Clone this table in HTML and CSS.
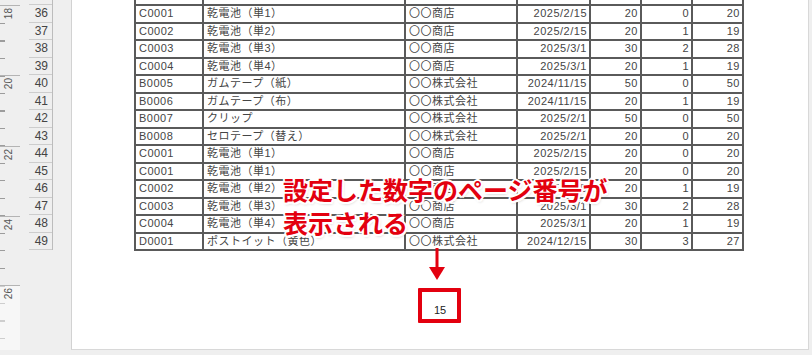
FILE: index.html
```html
<!DOCTYPE html>
<html lang="ja">
<head>
<meta charset="utf-8">
<title>ページ番号</title>
<link rel="stylesheet" href="styles.css">
</head>
<body>
<div class="app">
  <div class="workspace">
    <div class="ruler">
      <div class="ruler-light"></div>
      <div class="major m1"></div><span class="rlabel l1">18</span>
      <div class="major m2"></div><span class="rlabel l2">20</span>
      <div class="major m3"></div><span class="rlabel l3">22</span>
      <div class="major m4"></div><span class="rlabel l4">24</span>
      <div class="major m5"></div><span class="rlabel l5">26</span>
    </div>
    <div class="gutter">
      <div class="rowheads">
        <div class="rh"></div>
        <div class="rh">36</div>
        <div class="rh">37</div>
        <div class="rh">38</div>
        <div class="rh">39</div>
        <div class="rh">40</div>
        <div class="rh">41</div>
        <div class="rh">42</div>
        <div class="rh">43</div>
        <div class="rh">44</div>
        <div class="rh">45</div>
        <div class="rh">46</div>
        <div class="rh">47</div>
        <div class="rh">48</div>
        <div class="rh">49</div>
      </div>
    </div>
    <div class="page">
      <div class="sheet">
        <div></div><div></div><div></div><div class="n"></div><div class="n"></div><div class="n"></div><div class="n"></div>
        <div>C0001</div><div>乾電池（単1）</div><div>〇〇商店</div><div class="n">2025/2/15</div><div class="n">20</div><div class="n">0</div><div class="n">20</div>
        <div>C0002</div><div>乾電池（単2）</div><div>〇〇商店</div><div class="n">2025/2/15</div><div class="n">20</div><div class="n">1</div><div class="n">19</div>
        <div>C0003</div><div>乾電池（単3）</div><div>〇〇商店</div><div class="n">2025/3/1</div><div class="n">30</div><div class="n">2</div><div class="n">28</div>
        <div>C0004</div><div>乾電池（単4）</div><div>〇〇商店</div><div class="n">2025/3/1</div><div class="n">20</div><div class="n">1</div><div class="n">19</div>
        <div>B0005</div><div>ガムテープ（紙）</div><div>〇〇株式会社</div><div class="n">2024/11/15</div><div class="n">50</div><div class="n">0</div><div class="n">50</div>
        <div>B0006</div><div>ガムテープ（布）</div><div>〇〇株式会社</div><div class="n">2024/11/15</div><div class="n">20</div><div class="n">1</div><div class="n">19</div>
        <div>B0007</div><div>クリップ</div><div>〇〇株式会社</div><div class="n">2025/2/1</div><div class="n">50</div><div class="n">0</div><div class="n">50</div>
        <div>B0008</div><div>セロテープ（替え）</div><div>〇〇株式会社</div><div class="n">2025/2/1</div><div class="n">20</div><div class="n">0</div><div class="n">20</div>
        <div>C0001</div><div>乾電池（単1）</div><div>〇〇商店</div><div class="n">2025/2/15</div><div class="n">20</div><div class="n">0</div><div class="n">20</div>
        <div>C0001</div><div>乾電池（単1）</div><div>〇〇商店</div><div class="n">2025/2/15</div><div class="n">20</div><div class="n">0</div><div class="n">20</div>
        <div>C0002</div><div>乾電池（単2）</div><div>〇〇商店</div><div class="n">2025/2/15</div><div class="n">20</div><div class="n">1</div><div class="n">19</div>
        <div>C0003</div><div>乾電池（単3）</div><div>〇〇商店</div><div class="n">2025/3/1</div><div class="n">30</div><div class="n">2</div><div class="n">28</div>
        <div>C0004</div><div>乾電池（単4）</div><div>〇〇商店</div><div class="n">2025/3/1</div><div class="n">20</div><div class="n">1</div><div class="n">19</div>
        <div>D0001</div><div>ポストイット（黄色）</div><div>〇〇株式会社</div><div class="n">2024/12/15</div><div class="n">30</div><div class="n">3</div><div class="n">27</div>
      </div>
      <div class="footer">15</div>
    </div>
  </div>

  <div class="callout">設定した数字のページ番号が<br>表示される</div>
  <svg class="arrow" width="18" height="34" viewBox="0 0 18 34" aria-hidden="true">
    <rect x="7.5" y="0" width="3" height="22" fill="#e3000f"/>
    <polygon points="1,19 17,19 9,32" fill="#e3000f"/>
  </svg>
  <div class="redbox"></div>
</div>
</body>
</html>
```

FILE: styles.css
```css
* { box-sizing: border-box; }

body {
  margin: 0;
  background: #efefef;
  font-family: "Liberation Sans", "Noto Sans CJK JP", sans-serif;
}

.app {
  position: relative;
  width: 812px;
  height: 355px;
  overflow: hidden;
}

.workspace {
  display: flex;
  height: 350px;
}

/* vertical ruler */
.ruler {
  position: relative;
  flex: none;
  width: 20px;
  background-image: repeating-linear-gradient(to bottom, #9c9c9c 0 1px, transparent 1px 17.5px);
  background-size: 5px 100%;
  background-repeat: no-repeat;
  background-position: 0 22.5px;
}

.ruler-light {
  position: absolute;
  left: 0;
  top: 286px;
  width: 20px;
  height: 64px;
  background: rgba(255, 255, 255, 0.5);
}

.major {
  position: absolute;
  left: 0;
  width: 20px;
  height: 1px;
  background: #b4b4b4;
}
.m1 { top: 5px; }
.m2 { top: 75px; }
.m3 { top: 145.5px; }
.m4 { top: 216px; }
.m5 { top: 285px; }

.rlabel {
  position: absolute;
  left: 5px;
  writing-mode: vertical-rl;
  transform: rotate(180deg);
  font-size: 10px;
  line-height: 8px;
  color: #555;
}
.l1 { top: 8px; }
.l2 { top: 78px; }
.l3 { top: 148.5px; }
.l4 { top: 219px; }
.l5 { top: 288px; }

/* row headers */
.gutter {
  flex: none;
  width: 51px;
  overflow: hidden;
}

.rowheads {
  margin-left: 9px;
  margin-top: -12.5px;
  width: 24px;
  border-right: 1px solid #bcbcbc;
}

.rh {
  height: 17.5px;
  border-bottom: 1px solid #cdcdcd;
  padding-right: 4px;
  text-align: right;
  font-size: 12px;
  line-height: 16.5px;
  color: #444;
}

/* page */
.page {
  flex: 1;
  background: #fff;
  border-left: 1px solid #d2d2d2;
  border-right: 1px solid #d8d8d8;
  border-bottom: 1px solid #d8d8d8;
  margin-right: 3px;
  overflow: hidden;
}

.sheet {
  display: grid;
  grid-template-columns: 68px 202px 112px 73px 51px 51px 51px;
  grid-auto-rows: 17.5px;
  width: max-content;
  margin-left: 62px;
  margin-top: -13.5px;
  border-left: 2px solid #5a5a5a;
  border-top: 2px solid #5a5a5a;
}

.sheet > div {
  border-right: 2px solid #5a5a5a;
  border-bottom: 2px solid #5a5a5a;
  padding: 0 3px;
  font-size: 11px;
  line-height: 15.5px;
  letter-spacing: 0.5px;
  color: #454545;
  white-space: nowrap;
  overflow: hidden;
}

.sheet > .n {
  text-align: right;
  padding-right: 2px;
}

.footer {
  margin-top: 53px;
  text-align: center;
  font-size: 11px;
  line-height: 13px;
  color: #222;
}

/* annotations */
.callout {
  position: absolute;
  left: 283px;
  top: 173px;
  font-family: "Noto Sans CJK JP", sans-serif;
  font-weight: 700;
  font-size: 25px;
  line-height: 33px;
  color: #e3000f;
  white-space: nowrap;
  text-shadow:
    2px 0 0 #fff, -2px 0 0 #fff, 0 2px 0 #fff, 0 -2px 0 #fff,
    1.5px 1.5px 0 #fff, -1.5px 1.5px 0 #fff, 1.5px -1.5px 0 #fff, -1.5px -1.5px 0 #fff,
    1px 2px 3px rgba(0, 0, 0, 0.25);
}

.arrow {
  position: absolute;
  left: 428px;
  top: 248px;
}

.redbox {
  position: absolute;
  left: 418px;
  top: 288px;
  width: 43px;
  height: 35px;
  border: 4px solid #e3000f;
  border-radius: 1px;
}
```
